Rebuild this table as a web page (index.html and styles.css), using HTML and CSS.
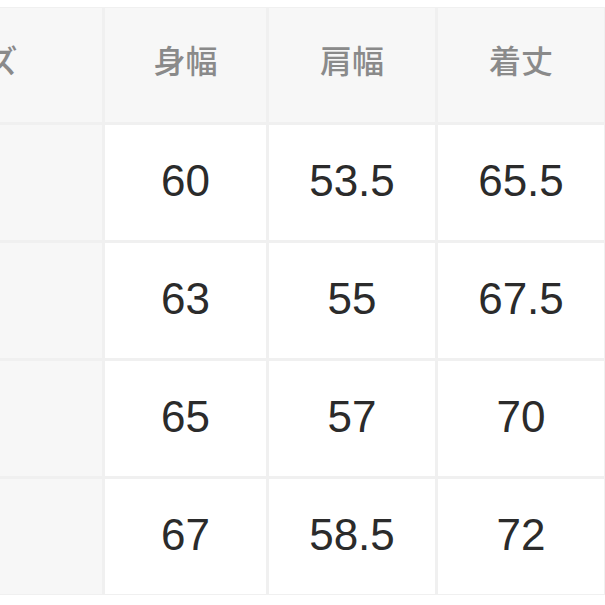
FILE: index.html
```html
<!DOCTYPE html>
<html lang="ja">
<head>
<meta charset="utf-8">
<link rel="stylesheet" href="styles.css">
</head>
<body>
<div class="page">
  <div class="table">
    <div class="cell head side">サイズ</div>
    <div class="cell head">身幅</div>
    <div class="cell head">肩幅</div>
    <div class="cell head">着丈</div>

    <div class="cell side"></div>
    <div class="cell num">60</div>
    <div class="cell num">53.5</div>
    <div class="cell num">65.5</div>

    <div class="cell side"></div>
    <div class="cell num">63</div>
    <div class="cell num">55</div>
    <div class="cell num">67.5</div>

    <div class="cell side"></div>
    <div class="cell num">65</div>
    <div class="cell num">57</div>
    <div class="cell num">70</div>

    <div class="cell side"></div>
    <div class="cell num">67</div>
    <div class="cell num">58.5</div>
    <div class="cell num">72</div>
  </div>
</div>
</body>
</html>
```
FILE: styles.css
```css
html, body {
  margin: 0;
  padding: 0;
  background: #ffffff;
}
.page {
  width: 605px;
  height: 605px;
  overflow: hidden;
  padding-top: 7px;
  box-sizing: border-box;
}
.table {
  display: grid;
  grid-template-columns: 264px 161px 166px 166px;
  grid-template-rows: 114px 115px 115px 115px 115px;
  gap: 3px;
  padding: 1px 1px 1px 0;
  margin-left: -162px;
  width: max-content;
  background: #f0f0f0;
}
.cell {
  display: flex;
  align-items: center;
  justify-content: center;
  background: #ffffff;
}
.side {
  background: #f7f7f7;
}
.head {
  background: #f7f7f7;
  color: #8a8a8a;
  font-family: "Noto Sans CJK JP", "Noto Sans", sans-serif;
  font-size: 32px;
  font-weight: 500;
  padding-bottom: 12px;
  box-sizing: border-box;
}
.num {
  color: #2b2b2b;
  font-family: "Liberation Sans", Arial, sans-serif;
  font-size: 44px;
  padding-bottom: 3px;
  box-sizing: border-box;
}
```
